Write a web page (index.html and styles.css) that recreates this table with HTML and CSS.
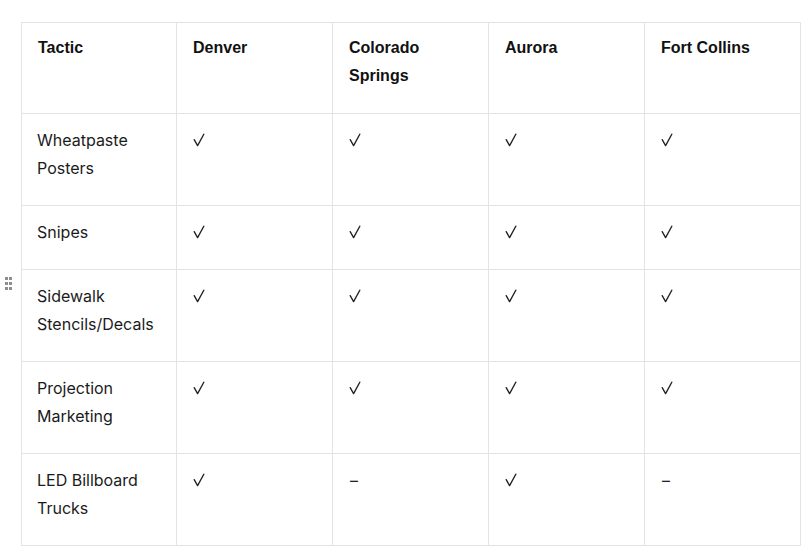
FILE: index.html
```html
<!DOCTYPE html>
<html>
<head>
<meta charset="utf-8">
<link rel="stylesheet" href="styles.css">
</head>
<body>
<svg width="0" height="0" class="defs" aria-hidden="true">
  <symbol id="chk" viewBox="0 0 12 14"><path d="M1.2 6.6 L4.6 12.6 L10.8 1.2" fill="none" stroke="#222" stroke-width="1.35" stroke-linecap="round" stroke-linejoin="round"/></symbol>
</svg>
<div class="wrap">
  <div class="handle" aria-hidden="true">
    <span></span><span></span><span></span><span></span><span></span><span></span>
  </div>
  <table class="grid">
    <colgroup><col class="first"><col><col><col><col></colgroup>
    <thead>
      <tr><th>Tactic</th><th>Denver</th><th>Colorado Springs</th><th>Aurora</th><th>Fort Collins</th></tr>
    </thead>
    <tbody>
      <tr><td>Wheatpaste Posters</td><td><svg class="chk"><use href="#chk"/></svg></td><td><svg class="chk"><use href="#chk"/></svg></td><td><svg class="chk"><use href="#chk"/></svg></td><td><svg class="chk"><use href="#chk"/></svg></td></tr>
      <tr><td>Snipes</td><td><svg class="chk"><use href="#chk"/></svg></td><td><svg class="chk"><use href="#chk"/></svg></td><td><svg class="chk"><use href="#chk"/></svg></td><td><svg class="chk"><use href="#chk"/></svg></td></tr>
      <tr><td>Sidewalk Stencils/Decals</td><td><svg class="chk"><use href="#chk"/></svg></td><td><svg class="chk"><use href="#chk"/></svg></td><td><svg class="chk"><use href="#chk"/></svg></td><td><svg class="chk"><use href="#chk"/></svg></td></tr>
      <tr><td>Projection Marketing</td><td><svg class="chk"><use href="#chk"/></svg></td><td><svg class="chk"><use href="#chk"/></svg></td><td><svg class="chk"><use href="#chk"/></svg></td><td><svg class="chk"><use href="#chk"/></svg></td></tr>
      <tr><td>LED Billboard Trucks</td><td><svg class="chk"><use href="#chk"/></svg></td><td class="d">–</td><td><svg class="chk"><use href="#chk"/></svg></td><td class="d">–</td></tr>
    </tbody>
  </table>
</div>
</body>
</html>
```
FILE: styles.css
```css
html, body {
  margin: 0;
  padding: 0;
  background: #ffffff;
}
.defs {
  position: absolute;
  width: 0;
  height: 0;
}
.wrap {
  position: relative;
  padding: 22px 0 0 21px;
}
.handle {
  position: absolute;
  left: 5px;
  top: 277px;
  display: grid;
  grid-template-columns: 3px 3px;
  grid-auto-rows: 3px;
  gap: 2px 1px;
}
.handle span {
  width: 3px;
  height: 3px;
  background: #8e8e8e;
}
.grid {
  border-collapse: collapse;
  table-layout: fixed;
  width: 779px;
}
.grid col {
  width: 156px;
}
.grid col.first {
  width: 155px;
}
.grid th, .grid td {
  border: 1px solid #e3e3e3;
  vertical-align: top;
  text-align: left;
  padding: 11px 15px 23px 16px;
  line-height: 28px;
  font-size: 16px;
  color: #1b1b1b;
}
.grid th {
  font-family: "Liberation Sans", Arial, sans-serif;
  font-weight: bold;
  color: #111;
}
.grid td {
  font-family: Inter, "Noto Sans", sans-serif;
  font-weight: 400;
  padding-top: 12px;
  padding-left: 15px;
}
.chk {
  display: block;
  width: 12px;
  height: 14px;
  margin: 7px 0 0 1px;
}
.grid td.d {
  padding-left: 17px;
  color: #222;
}
```
